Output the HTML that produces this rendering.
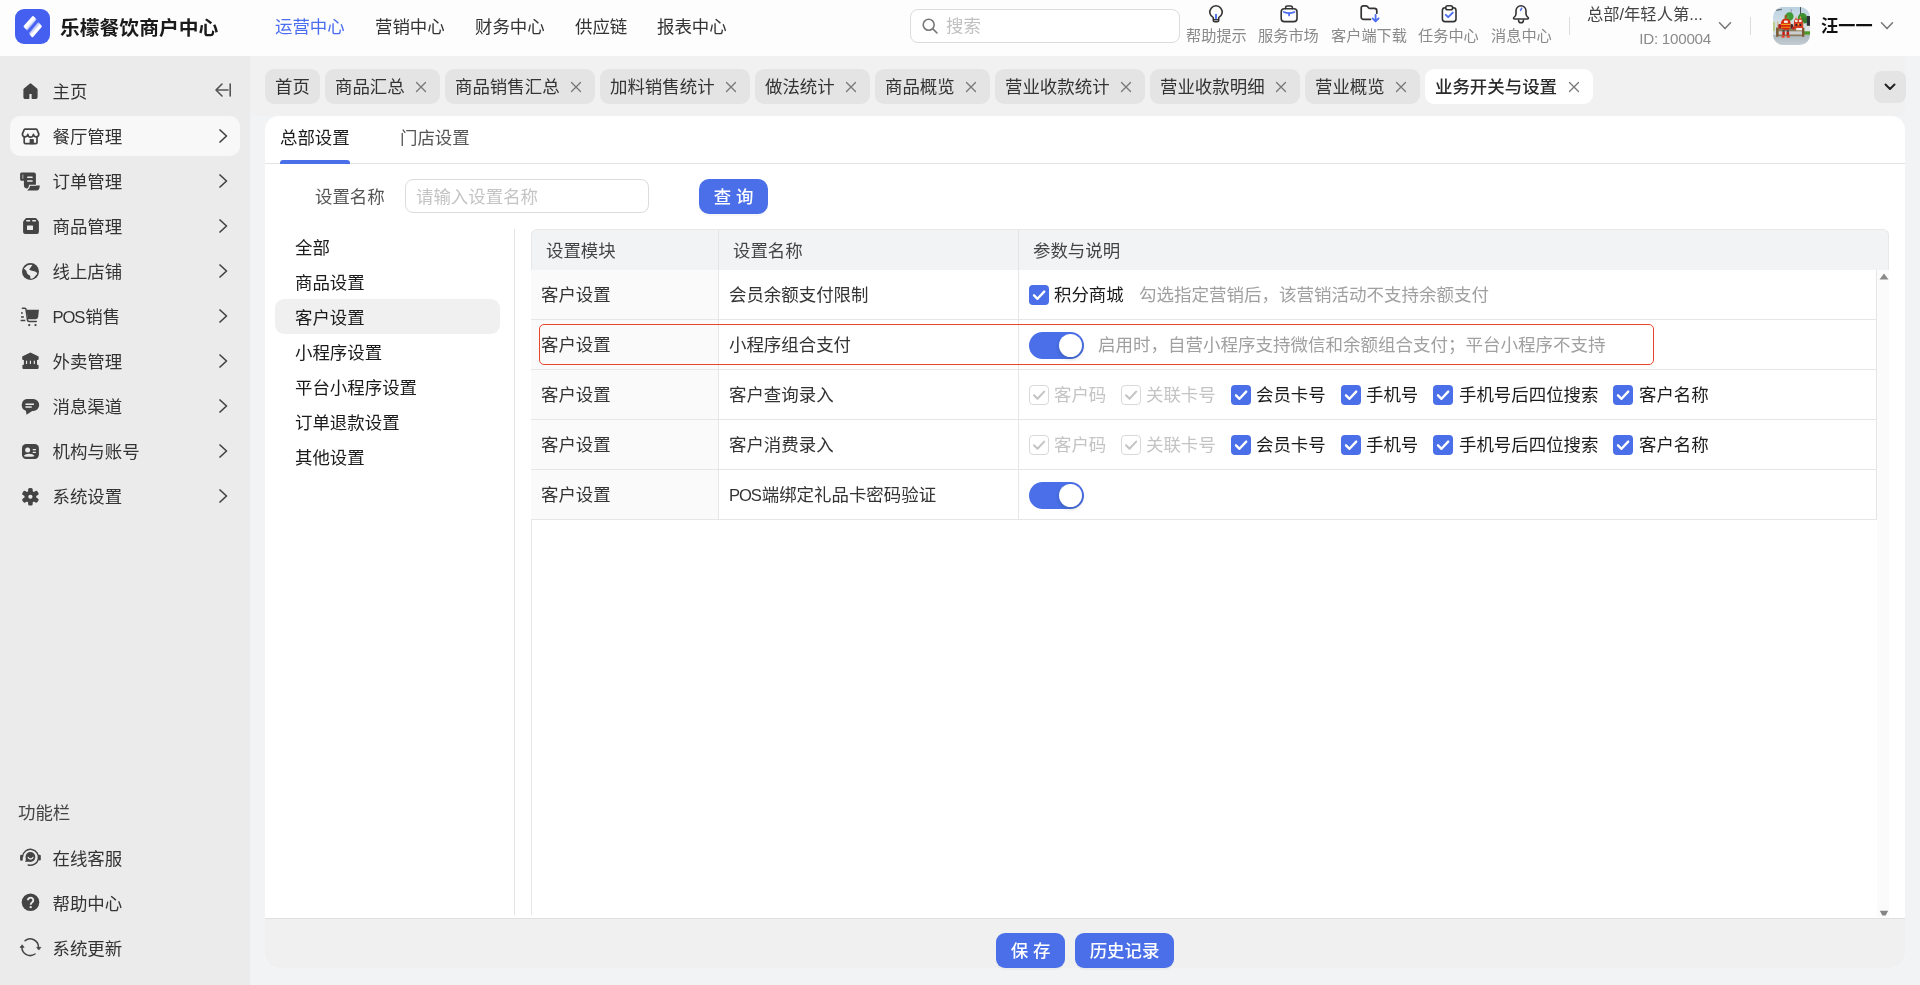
<!DOCTYPE html>
<html lang="zh-CN">
<head>
<meta charset="utf-8">
<title>乐檬餐饮商户中心</title>
<style>
*{box-sizing:border-box;margin:0;padding:0}
html,body{width:1920px;height:985px;overflow:hidden}
body{will-change:transform;font-family:"Liberation Sans","Noto Sans CJK SC",sans-serif;font-size:16px;color:#333;background:#f2f3f5;position:relative}
.abs{position:absolute}
/* header */
#hdr{position:absolute;left:0;top:0;width:1920px;height:56px;background:#fdfdfd}
#logo{position:absolute;left:15px;top:9px;width:35px;height:35px;border-radius:9px;background:#4560f0}
#brand{position:absolute;left:60px;top:12.600px;font-size:19.8px;line-height:30px;font-weight:700;color:#1a1a1a;letter-spacing:0px;white-space:nowrap}
.nav{position:absolute;top:12px;font-size:17.45px;line-height:30px;color:#333;white-space:nowrap}
.nav.on{color:#4a6cf0}
#search{position:absolute;left:910px;top:9px;width:270px;height:34px;border:1px solid #dcdcdc;border-radius:8px;background:#fff}
#search span{position:absolute;left:35px;top:2px;font-size:17.45px;line-height:28px;color:#c0c0c0}
.tool{position:absolute;top:26px;font-size:15.2px;line-height:20px;color:#8a8a8a;white-space:nowrap;text-align:center}
.tico{position:absolute;top:3px;width:22px;height:22px}
.vsep{position:absolute;top:17px;width:1px;height:18px;background:#dcdcdc}
/* sidebar */
#side{position:absolute;left:0;top:56px;width:250px;height:929px;background:#ebebeb}
.mi{position:absolute;left:10px;width:230px;height:40px;border-radius:10px}
.mi.on{background:#f8f8f8}
.mi .tx{position:absolute;left:42.500px;top:6px;font-size:17.45px;line-height:30px;color:#333;white-space:nowrap}
.mi svg.ic{position:absolute;left:11px;top:10px;width:20px;height:20px}
.mi svg.ar{position:absolute;left:207px;top:12px;width:12px;height:16px}
/* tabs */
.tab{position:absolute;top:69px;height:35px;border-radius:9px;background:#e4e4e4;font-size:17.45px;line-height:36px;color:#333;white-space:nowrap;padding-left:10px}
.tab.on{background:#fff;font-weight:500;color:#2a2a2a}
.tab svg{position:absolute;right:13px;top:12px;width:12px;height:12px}
/* card */
#card{position:absolute;left:265px;top:116px;width:1640px;height:852px;border-radius:14px;background:#fff;overflow:hidden}
#foot{position:absolute;left:0;top:802px;width:1640px;height:50px;background:#f0f0f0;border-top:1px solid #e0e0e0}
.btn{position:absolute;height:34px;border-radius:8px;background:#4a6fe8;color:#fff;font-weight:500;box-shadow:0 2px 0 rgba(0,0,0,.03);font-size:17.45px;line-height:34px;text-align:center;white-space:nowrap}
.cat{position:absolute;left:275px;width:225px;height:35px;border-radius:9px;font-size:17.45px;line-height:39px;padding-left:20px;color:#1a1a1a;white-space:nowrap}
.cat.on{background:#f0f0f0}
/* table */
#thead{position:absolute;left:531px;top:229px;width:1358px;height:41px;background:#f2f3f5;border:1px solid #e8e8e8;border-bottom:none;border-radius:6px 6px 0 0}
.th{position:absolute;top:230px;font-size:17.45px;line-height:42px;color:#444;white-space:nowrap}
.row{position:absolute;left:531px;width:1346px;height:50px;border-bottom:1px solid #e6e6e6}
.c1{position:absolute;left:0;top:0;width:187px;height:49px;background:#fafafa;font-size:17.45px;line-height:51px;padding-left:10px;color:#333}
.c2{position:absolute;left:187px;top:0;width:301px;height:49px;border-left:1px solid #e6e6e6;border-right:1px solid #e6e6e6;font-size:17.45px;line-height:51px;padding-left:10px;color:#333;white-space:nowrap}
.c3{position:absolute;left:487px;top:0;height:49px;font-size:17.45px;line-height:49px;white-space:nowrap}
.cb{position:absolute;top:15px;width:20px;height:20px;border-radius:4px;background:#4a6fe8}
.cb.dis{background:#fff;border:1px solid #d9d9d9}
.cb svg{position:absolute;left:0;top:0;width:20px;height:20px}
.cb.dis svg{left:-1px;top:-1px}
.lb{position:absolute;top:0;font-size:17.45px;line-height:51px;color:#1a1a1a;white-space:nowrap}
.lb.dis{color:#c4c4c4}
.lb.hint{color:#a0a0a0;font-size:17.5px}
.sw{position:absolute;left:498px;top:12px;width:55px;height:27px;border-radius:13.5px;background:#4a6fe8}
.sw i{position:absolute;right:2px;top:2px;width:23px;height:23px;border-radius:12px;background:#fff;box-shadow:0 2px 4px rgba(0,35,11,.2)}
.lat{font-size:16.6px;letter-spacing:-1.1px;margin-right:1px}
</style>
</head>
<body>
<div id="hdr">
  <div id="logo"><svg width="35" height="35" viewBox="0 0 35 35"><defs><linearGradient id="lg1" gradientUnits="userSpaceOnUse" x1="11" y1="10" x2="17.2" y2="15.6"><stop offset="0.7" stop-color="#fff"/><stop offset="0.95" stop-color="#fff" stop-opacity="0.45"/></linearGradient><linearGradient id="lg2" gradientUnits="userSpaceOnUse" x1="24.4" y1="25.4" x2="18.2" y2="19.8"><stop offset="0.7" stop-color="#fff"/><stop offset="0.95" stop-color="#fff" stop-opacity="0.45"/></linearGradient></defs><path d="M18 7.900 L20.600 10.600 L12.200 20.500 L9.500 17.400 Z" fill="url(#lg1)" stroke="url(#lg1)" stroke-width="1.800" stroke-linejoin="round"/><path d="M23.300 14.100 L26 17.500 L17.400 27.300 L14.900 24.300 Z" fill="url(#lg2)" stroke="url(#lg2)" stroke-width="1.800" stroke-linejoin="round"/></svg></div>
  <div id="brand">乐檬餐饮商户中心</div>
  <div class="nav on" style="left:275px">运营中心</div>
  <div class="nav" style="left:375px">营销中心</div>
  <div class="nav" style="left:475px">财务中心</div>
  <div class="nav" style="left:575px">供应链</div>
  <div class="nav" style="left:657px">报表中心</div>
  <div id="search"><svg class="abs" style="left:10px;top:7px" width="18" height="18" viewBox="0 0 18 18"><circle cx="7.700" cy="7.700" r="5.500" fill="none" stroke="#777" stroke-width="1.600"/><path d="M11.900 11.900 L16 16" stroke="#777" stroke-width="1.600" stroke-linecap="round"/></svg><span>搜索</span></div>
  <div class="tool" style="left:1186px;width:60px">帮助提示</div>
  <div class="tool" style="left:1258px;width:60px">服务市场</div>
  <div class="tool" style="left:1331px;width:75px">客户端下载</div>
  <div class="tool" style="left:1418px;width:60px">任务中心</div>
  <div class="tool" style="left:1491px;width:60px">消息中心</div>
<svg class="abs" style="left:1206px;top:4px" width="20" height="20" viewBox="0 0 20 20" fill="none" stroke-linecap="round" stroke-linejoin="round"><path d="M7.3 13.6 A6.2 6.2 0 1 1 12.7 13.6 V16.6 a1 1 0 0 1 -1 1 H8.3 a1 1 0 0 1 -1 -1 Z" stroke="#333" stroke-width="1.6"/><path d="M7.6 15.6 H12.4" stroke="#333" stroke-width="1.4"/><path d="M10 10.6 V14.2" stroke="#4a6cf0" stroke-width="1.9"/></svg>
<svg class="abs" style="left:1279px;top:4px" width="20" height="20" viewBox="0 0 20 20" fill="none" stroke-linecap="round" stroke-linejoin="round"><rect x="2.2" y="4.8" width="15.8" height="12.8" rx="3.2" stroke="#333" stroke-width="1.6"/><path d="M6.6 4.6 V3.6 a1.6 1.6 0 0 1 1.6 -1.6 h3.6 a1.6 1.6 0 0 1 1.6 1.6 V4.6" stroke="#333" stroke-width="1.6"/><path d="M4.8 8 Q10 10.4 15.4 8" stroke="#4a6cf0" stroke-width="1.8"/><path d="M10.1 9.4 V11.4" stroke="#4a6cf0" stroke-width="1.8"/></svg>
<svg class="abs" style="left:1360px;top:4px" width="20" height="20" viewBox="0 0 20 20" fill="none" stroke-linecap="round" stroke-linejoin="round"><path d="M10.4 15.4 H3.4 a2.2 2.2 0 0 1 -2.2 -2.2 V4 a2.2 2.2 0 0 1 2.2 -2.2 H6 a1.6 1.6 0 0 1 1.2 0.5 l1.4 1.6 a1.6 1.6 0 0 0 1.2 0.5 H14.4 a2.4 2.4 0 0 1 2.4 2.4 V9.2" stroke="#333" stroke-width="1.7"/><path d="M15.6 10.8 V17 M12.6 14.4 L15.6 17.4 L18.6 14.4" stroke="#4a6cf0" stroke-width="1.8"/></svg>
<svg class="abs" style="left:1439px;top:4px" width="20" height="20" viewBox="0 0 20 20" fill="none" stroke-linecap="round" stroke-linejoin="round"><rect x="3.4" y="3.8" width="13.6" height="13.8" rx="2.6" stroke="#333" stroke-width="1.6"/><rect x="6.8" y="1.8" width="6.8" height="4" rx="1.8" fill="#fdfdfd" stroke="#333" stroke-width="1.6"/><path d="M6.8 10.8 L9.2 13.2 L13.8 8.6" stroke="#4a6cf0" stroke-width="1.9"/></svg>
<svg class="abs" style="left:1511px;top:4px" width="20" height="20" viewBox="0 0 20 20" fill="none" stroke-linecap="round" stroke-linejoin="round"><path d="M10 1.8 a5 5 0 0 1 5 5 v3.2 c0 1.5 0.9 2.5 2.1 3.5 c0.6 0.5 0.3 1.5 -0.6 1.5 H3.5 c-0.9 0 -1.2 -1 -0.6 -1.5 c1.2 -1 2.1 -2 2.1 -3.5 v-3.200 a5 5 0 0 1 5 -5 Z" stroke="#333" stroke-width="1.6"/><path d="M7.5 15.9 a2.5 2.9 0 0 0 5 0" stroke="#333" stroke-width="1.5"/><path d="M10.7 4.2 L9.6 6.4" stroke="#4a6cf0" stroke-width="1.5"/></svg>
<svg class="abs" style="left:1718px;top:21px" width="14" height="10" viewBox="0 0 14 10"><path d="M1.5 1.8 L7 7.6 L12.5 1.8" fill="none" stroke="#777" stroke-width="1.5" stroke-linecap="round" stroke-linejoin="round"/></svg>
<svg class="abs" style="left:1880px;top:21px" width="14" height="10" viewBox="0 0 14 10"><path d="M1.5 1.8 L7 7.6 L12.5 1.8" fill="none" stroke="#777" stroke-width="1.5" stroke-linecap="round" stroke-linejoin="round"/></svg>
  <div class="vsep" style="left:1569px"></div>
  <div class="abs" style="left:1587px;top:3px;font-size:16.3px;line-height:22px;color:#444;white-space:nowrap">总部/年轻人第...</div>
  <div class="abs" style="left:1611px;width:100px;text-align:right;top:29px;font-size:15.2px;line-height:20px;letter-spacing:-0.25px;color:#8a8a8a;white-space:nowrap">ID: 100004</div>
  <div class="vsep" style="left:1750px"></div>
  <div class="abs" style="left:1773px;top:7px;width:37px;height:38px;border-radius:10px;overflow:hidden"><svg width="37" height="38" viewBox="0 0 37 38"><defs><filter id="bl" x="-5%" y="-5%" width="110%" height="110%"><feGaussianBlur stdDeviation="0.35"/></filter><linearGradient id="sky" x1="0" y1="0" x2="0" y2="1"><stop offset="0" stop-color="#b9d0e0"/><stop offset="1" stop-color="#dbe5ea"/></linearGradient><linearGradient id="gnd" x1="0" y1="0" x2="0" y2="1"><stop offset="0" stop-color="#aab6bd"/><stop offset="1" stop-color="#c7d0d6"/></linearGradient></defs><g filter="url(#bl)"><rect x="-1" y="-1" width="39" height="23" fill="url(#sky)"/><rect x="-1" y="27.500" width="39" height="12" fill="url(#gnd)"/><rect x="0" y="13" width="37" height="15" fill="#d3dcdf"/><rect x="27" y="0" width="1" height="8" fill="#4a4f52"/><rect x="17.800" y="2" width="0.700" height="5" fill="#7c868c"/><path d="M3 2.500 L9 1.800 L9 3 L3 4 Z" fill="#6d767c"/><circle cx="16.400" cy="9.500" r="4.200" fill="#3f9a35"/><circle cx="14" cy="10.500" r="2.600" fill="#4aa640"/><ellipse cx="29.500" cy="11" rx="4.600" ry="5" fill="#3c8f33"/><circle cx="31.500" cy="13.500" r="3" fill="#347f2d"/><rect x="33.800" y="9" width="4" height="10" fill="#2f3537"/><rect x="32.500" y="18.800" width="5" height="5.500" fill="#dfe4e6"/><rect x="31" y="24.300" width="7" height="3.400" fill="#4c9a2a"/><rect x="0" y="15" width="2" height="9" fill="#b7cf8a"/><rect x="3.200" y="20.600" width="28" height="8.600" fill="#8d7a5c"/><rect x="5.500" y="24.300" width="23.500" height="3.200" fill="#c9cdcd"/><rect x="3.200" y="20.600" width="2.200" height="9.200" fill="#7a5a34"/><rect x="29" y="20.600" width="2.200" height="9.200" fill="#7a5a34"/><rect x="4.200" y="14.500" width="1" height="6.500" fill="#c8b389"/><rect x="29.600" y="15" width="1" height="6" fill="#c8b389"/><path d="M12.900 11.600 C16.500 11.600 17.900 14.500 17.700 18 C17.700 21.500 16.500 22.800 12.900 22.800 C9.300 22.800 7.900 21.500 7.900 18 C7.700 14.500 9.300 11.600 12.900 11.600 Z" fill="#d8260f"/><rect x="8.200" y="16.800" width="9.300" height="1.200" fill="#f0a31c"/><rect x="8.200" y="19.800" width="9.300" height="1" fill="#e98a12"/><rect x="10.900" y="13.600" width="4" height="2.400" rx="0.800" fill="#f4efe6"/><path d="M11.500 8.300 L12.900 11.500 L14.300 8.300 L13.400 8.300 L12.900 9.800 L12.400 8.300 Z" fill="#d8260f"/><rect x="5.300" y="17" width="2.700" height="4.600" rx="1.200" fill="#b11d14"/><rect x="17.600" y="17" width="2.500" height="4.600" rx="1.200" fill="#3a2a28"/><rect x="9.500" y="23" width="2.100" height="2" fill="#4a4f50"/><rect x="13.800" y="23" width="2.100" height="2" fill="#4a4f50"/><rect x="9.300" y="24.800" width="2.500" height="3.600" fill="#c81d12"/><rect x="13.600" y="24.800" width="2.500" height="3.600" fill="#c81d12"/><ellipse cx="10.100" cy="29.800" rx="1.900" ry="0.900" fill="#f0391c"/><ellipse cx="15.200" cy="29.800" rx="1.900" ry="0.900" fill="#f0391c"/><path d="M21 14 L22.500 11 L25.300 12.200 L28 11 L29.800 14 L30 22 L20.600 22 Z" fill="#d43a22"/><rect x="22" y="12.800" width="2.600" height="2.200" fill="#f1ece2"/><rect x="26" y="12.800" width="2.600" height="2.200" fill="#f1ece2"/><path d="M22.300 11.200 L23.400 8.800 L24 11.400 Z M26.600 11.400 L27.300 8.800 L28.300 11.200 Z" fill="#e8a05a"/><rect x="23.200" y="21" width="5.800" height="2.300" fill="#f2efe8"/><rect x="22.600" y="17" width="1.600" height="2" fill="#2c2523"/><rect x="26.600" y="17" width="1.600" height="2" fill="#2c2523"/><path d="M24.400 16.500 L26.400 16.500 L25.400 18.600 Z" fill="#f0b429"/><rect x="19.200" y="19.500" width="2.200" height="3" rx="1" fill="#c4241a"/></g></svg></div>
  <div class="abs" style="left:1821px;top:11px;font-size:17.2px;line-height:30px;color:#111;font-weight:700;white-space:nowrap">汪一一</div>
</div>
<div class="abs" style="left:250px;top:56px;width:1655px;height:60px;background:#f1f1f1"></div>
<div id="side">
<div class="mi" style="top:15px"><svg class="ic" viewBox="0 0 20 20" overflow="visible"><path d="M9.5 3 L3.2 8.4 V16.2 a1 1 0 0 0 1 1 H7.6 V13 a0.8 0.8 0 0 1 0.8 -0.8 h2.2 a0.8 0.8 0 0 1 0.800 0.8 V17.2 H14.800 a1 1 0 0 0 1 -1 V8.4 Z" fill="#444" stroke="#444" stroke-width="1.6" stroke-linejoin="round"/></svg><div class="tx">主页</div></div>
<div class="mi on" style="top:60px"><svg class="ic" viewBox="0 0 20 20" overflow="visible"><g transform="translate(-0.4 0.3)"><path d="M4.6 2.8 H15.4 a1.2 1.2 0 0 1 1.1 0.7 L18.2 7.6 a2.7 2.7 0 0 1 -5.4 0.4 a2.8 2.8 0 0 1 -5.600 0 a2.700 2.700 0 0 1 -5.400 -0.400 L3.500 3.500 a1.200 1.200 0 0 1 1.100 -0.700 Z" fill="none" stroke="#444" stroke-width="1.7" stroke-linejoin="round"/><path d="M3.600 10.600 V16.200 a1.200 1.200 0 0 0 1.200 1.200 H15.200 a1.200 1.200 0 0 0 1.200 -1.200 V10.600" fill="none" stroke="#444" stroke-width="1.7" stroke-linejoin="round"/><path d="M9.600 17.400 V13.400 H12.600 V17.400 Z" fill="#444" stroke="#444" stroke-width="1.200" stroke-linejoin="round"/></g></svg><div class="tx">餐厅管理</div><svg class="ar" viewBox="0 0 12 16"><path d="M3 2 L9.5 8 L3 14" fill="none" stroke="#444" stroke-width="1.7" stroke-linecap="round" stroke-linejoin="round"/></svg></div>
<div class="mi" style="top:105px"><svg class="ic" viewBox="0 0 20 20" overflow="visible"><path d="M0.6 1.6 H12.9 a2 2 0 0 1 2 2 V14.6 H8 V17.6 H6.400 a3.500 3.500 0 0 1 -3.500 -3.500 V9.700 H0.600 a1.500 1.500 0 0 1 -1.500 -1.500 V3.100 a1.500 1.500 0 0 1 1.500 -1.500 Z" fill="#444"/><rect x="1" y="3.600" width="1.500" height="4.200" fill="#8e8e8e"/><rect x="6.100" y="5.500" width="5.600" height="1.500" rx="0.500" fill="#ebebeb"/><rect x="6.100" y="9.300" width="5.600" height="1.500" rx="0.500" fill="#ebebeb"/><path d="M8.200 14.500 H18.900 L18.300 17.600 a2.200 2.200 0 0 1 -2.100 1.800 H6.300 Z" fill="#444"/><path d="M5.600 18.800 Q8.200 17.800 8.600 14.300 H15" fill="none" stroke="#ebebeb" stroke-width="1.100"/></svg><div class="tx">订单管理</div><svg class="ar" viewBox="0 0 12 16"><path d="M3 2 L9.5 8 L3 14" fill="none" stroke="#444" stroke-width="1.7" stroke-linecap="round" stroke-linejoin="round"/></svg></div>
<div class="mi" style="top:150px"><svg class="ic" viewBox="0 0 20 20" overflow="visible"><path d="M5.800 1.900 H14.200 a1.800 1.800 0 0 1 1.500 0.800 L17.600 5.200 a1.800 1.800 0 0 1 0.300 1 V16 a2 2 0 0 1 -2 2 H4.100 a2 2 0 0 1 -2 -2 V6.200 a1.800 1.800 0 0 1 0.300 -1 L4.300 2.700 a1.800 1.800 0 0 1 1.500 -0.800 Z" fill="#444"/><rect x="5.200" y="3.900" width="4" height="1.600" rx="0.400" fill="#ebebeb"/><rect x="11.200" y="3.900" width="3.800" height="1.600" rx="0.400" fill="#ebebeb"/><rect x="6" y="9.500" width="6" height="4.400" rx="0.500" fill="#ebebeb"/></svg><div class="tx">商品管理</div><svg class="ar" viewBox="0 0 12 16"><path d="M3 2 L9.5 8 L3 14" fill="none" stroke="#444" stroke-width="1.7" stroke-linecap="round" stroke-linejoin="round"/></svg></div>
<div class="mi" style="top:195px"><svg class="ic" viewBox="0 0 20 20" overflow="visible"><circle cx="9.500" cy="10.400" r="8.500" fill="#444"/><path d="M2.900 7.400 L6.300 4.400 Q9 3.200 11.400 3.900 L8.200 8.600 Q8.400 9.600 11.900 10 Q14.600 10.400 15.300 11.200 Q16.400 12 16.100 13 L12.700 16.800 Q11 17.800 9.300 17.600 Q9.600 15.600 8.900 14.500 Q7.400 13.900 6.300 12.700 Q5.400 11.400 5.500 10 Z" fill="#ebebeb"/></svg><div class="tx">线上店铺</div><svg class="ar" viewBox="0 0 12 16"><path d="M3 2 L9.5 8 L3 14" fill="none" stroke="#444" stroke-width="1.7" stroke-linecap="round" stroke-linejoin="round"/></svg></div>
<div class="mi" style="top:240px"><svg class="ic" viewBox="0 0 20 20" overflow="visible"><path d="M5.500 3.800 H17.900 L17.200 10.800 a2.600 2.600 0 0 1 -2.600 2.400 H7 Z" fill="#444"/><path d="M1.400 2.300 H3.800 a1.200 1.200 0 0 1 1.200 1 L6.500 14.200 a1.600 1.600 0 0 0 1.600 1.400 H15.300" fill="none" stroke="#444" stroke-width="1.500" stroke-linecap="round"/><circle cx="8.200" cy="19.100" r="1.150" fill="#444"/><circle cx="14.500" cy="19.100" r="1.150" fill="#444"/><path d="M0 7.100 H1.800 M0 10.900 H2.900 M-0.400 14.500 H4.300" stroke="#444" stroke-width="1.500"/></svg><div class="tx"><span class="lat">POS</span>销售</div><svg class="ar" viewBox="0 0 12 16"><path d="M3 2 L9.5 8 L3 14" fill="none" stroke="#444" stroke-width="1.7" stroke-linecap="round" stroke-linejoin="round"/></svg></div>
<div class="mi" style="top:285px"><svg class="ic" viewBox="0 0 20 20" overflow="visible"><path d="M9.400 1.600 L17.200 5.300 a0.800 0.800 0 0 1 0.450 0.700 V8.100 a0.800 0.800 0 0 1 -0.800 0.800 H16 V13.800 H16.800 a0.800 0.800 0 0 1 0.800 0.800 V17.100 a0.800 0.800 0 0 1 -0.800 0.800 H2.200 a0.800 0.800 0 0 1 -0.800 -0.800 V14.600 a0.800 0.800 0 0 1 0.800 -0.800 H2.900 V8.900 H2 a0.800 0.800 0 0 1 -0.800 -0.800 V6 a0.800 0.800 0 0 1 0.450 -0.700 Z" fill="#444"/><rect x="4.950" y="9.700" width="1.150" height="3.300" fill="#ebebeb"/><rect x="8.850" y="9.700" width="1.150" height="3.300" fill="#ebebeb"/><rect x="12.750" y="9.700" width="1.150" height="3.300" fill="#ebebeb"/></svg><div class="tx">外卖管理</div><svg class="ar" viewBox="0 0 12 16"><path d="M3 2 L9.5 8 L3 14" fill="none" stroke="#444" stroke-width="1.7" stroke-linecap="round" stroke-linejoin="round"/></svg></div>
<div class="mi" style="top:330px"><svg class="ic" viewBox="0 0 20 20" overflow="visible"><path d="M7 3 H12.200 a6 6 0 0 1 0 12 H11.200 L5.500 18.800 L4.900 14.700 A6 6 0 0 1 7 3 Z" fill="#444"/><rect x="4.400" y="7.400" width="8.600" height="1.600" rx="0.400" fill="#ebebeb"/><rect x="4.400" y="10.200" width="6.400" height="1.600" rx="0.400" fill="#ebebeb"/></svg><div class="tx">消息渠道</div><svg class="ar" viewBox="0 0 12 16"><path d="M3 2 L9.5 8 L3 14" fill="none" stroke="#444" stroke-width="1.7" stroke-linecap="round" stroke-linejoin="round"/></svg></div>
<div class="mi" style="top:375px"><svg class="ic" viewBox="0 0 20 20" overflow="visible"><rect x="1" y="2.900" width="16.900" height="15" rx="4.200" fill="#444"/><circle cx="6.650" cy="9.100" r="2.500" fill="#ebebeb"/><path d="M2.900 15.300 a5.250 2.600 0 0 1 10.500 0 Q8.100 16.400 2.900 15.300 Z" fill="#ebebeb"/><rect x="11.700" y="7.900" width="3.200" height="1.300" rx="0.300" fill="#ebebeb"/><rect x="11.700" y="10.700" width="3.200" height="1.300" rx="0.300" fill="#ebebeb"/></svg><div class="tx">机构与账号</div><svg class="ar" viewBox="0 0 12 16"><path d="M3 2 L9.5 8 L3 14" fill="none" stroke="#444" stroke-width="1.7" stroke-linecap="round" stroke-linejoin="round"/></svg></div>
<div class="mi" style="top:420px"><svg class="ic" viewBox="0 0 20 20" overflow="visible"><circle cx="9.4" cy="10.75" r="5.9" fill="#444"/><rect x="7.1000000000000005" y="1.9499999999999993" width="4.6" height="6" rx="1.5" fill="#444" transform="rotate(0 9.4 10.75)"/><rect x="7.1000000000000005" y="1.9499999999999993" width="4.6" height="6" rx="1.5" fill="#444" transform="rotate(60 9.4 10.75)"/><rect x="7.1000000000000005" y="1.9499999999999993" width="4.6" height="6" rx="1.5" fill="#444" transform="rotate(120 9.4 10.75)"/><rect x="7.1000000000000005" y="1.9499999999999993" width="4.6" height="6" rx="1.5" fill="#444" transform="rotate(180 9.4 10.75)"/><rect x="7.1000000000000005" y="1.9499999999999993" width="4.6" height="6" rx="1.5" fill="#444" transform="rotate(240 9.4 10.75)"/><rect x="7.1000000000000005" y="1.9499999999999993" width="4.6" height="6" rx="1.5" fill="#444" transform="rotate(300 9.4 10.75)"/><circle cx="9.4" cy="10.75" r="2.1" fill="#ebebeb"/></svg><div class="tx">系统设置</div><svg class="ar" viewBox="0 0 12 16"><path d="M3 2 L9.5 8 L3 14" fill="none" stroke="#444" stroke-width="1.7" stroke-linecap="round" stroke-linejoin="round"/></svg></div>
<div class="mi" style="top:782px"><svg class="ic" viewBox="0 0 20 20" overflow="visible"><path d="M1.500 8.600 A8 8 0 1 1 7.200 17" fill="none" stroke="#444" stroke-width="1.500" stroke-linecap="round"/><rect x="-0.900" y="6.700" width="2.700" height="6" rx="1.300" fill="#444"/><rect x="17.100" y="6.700" width="2.700" height="5.800" rx="1.300" fill="#444"/><circle cx="9.400" cy="9" r="4.900" fill="#444"/><path d="M4.300 14 L5 10.500 L8.400 13.600 Z" fill="#444"/><path d="M7.200 9.400 a2.500 2.200 0 0 0 4.800 0" fill="none" stroke="#ebebeb" stroke-width="1.300" stroke-linecap="round"/></svg><div class="tx">在线客服</div></div>
<div class="mi" style="top:827px"><svg class="ic" viewBox="0 0 20 20" overflow="visible"><circle cx="9.500" cy="9.200" r="8.800" fill="#444"/><path d="M6.900 7.200 a2.700 2.500 0 1 1 4.300 2 c-1 0.700 -1.500 1.200 -1.500 2.500" fill="none" stroke="#ebebeb" stroke-width="1.900" stroke-linecap="butt"/><circle cx="9.700" cy="14.100" r="1.200" fill="#ebebeb"/></svg><div class="tx">帮助中心</div></div>
<div class="mi" style="top:872px"><svg class="ic" viewBox="0 0 20 20" overflow="visible"><path d="M4.100 2.700 A8.300 8.300 0 0 1 17.500 9.200" fill="none" stroke="#444" stroke-width="1.500" stroke-linecap="round"/><path d="M14 16 A8.300 8.300 0 0 1 0.900 9.200" fill="none" stroke="#444" stroke-width="1.500" stroke-linecap="round"/><path d="M15.600 9.300 H20 L17.800 12.100 Z" fill="#444" stroke="#444" stroke-width="0.600" stroke-linejoin="round"/><path d="M-1 9.400 H3.200 L1.100 6.700 Z" fill="#444" stroke="#444" stroke-width="0.600" stroke-linejoin="round"/></svg><div class="tx">系统更新</div></div>
<svg class="abs" style="left:214px;top:26px" width="18" height="16" viewBox="0 0 18 16"><path d="M8 2 L2 8 L8 14 M2 8 H14 M16.2 2 V14" fill="none" stroke="#555" stroke-width="1.6" stroke-linecap="round" stroke-linejoin="round"/></svg>
<div class="abs" style="left:18px;top:742px;font-size:17.45px;line-height:30px;color:#444">功能栏</div>
</div>
<div class="tab" style="left:265px;width:55px">首页</div>
<div class="tab" style="left:325px;width:115px">商品汇总<svg viewBox="0 0 12 12"><path d="M1.5 1.5 L10.5 10.5 M10.5 1.5 L1.5 10.5" stroke="#777" stroke-width="1.3" stroke-linecap="round"/></svg></div>
<div class="tab" style="left:445px;width:150px">商品销售汇总<svg viewBox="0 0 12 12"><path d="M1.5 1.5 L10.5 10.5 M10.5 1.5 L1.5 10.5" stroke="#777" stroke-width="1.3" stroke-linecap="round"/></svg></div>
<div class="tab" style="left:600px;width:150px">加料销售统计<svg viewBox="0 0 12 12"><path d="M1.5 1.5 L10.5 10.5 M10.5 1.5 L1.5 10.5" stroke="#777" stroke-width="1.3" stroke-linecap="round"/></svg></div>
<div class="tab" style="left:755px;width:115px">做法统计<svg viewBox="0 0 12 12"><path d="M1.5 1.5 L10.5 10.5 M10.5 1.5 L1.5 10.5" stroke="#777" stroke-width="1.3" stroke-linecap="round"/></svg></div>
<div class="tab" style="left:875px;width:115px">商品概览<svg viewBox="0 0 12 12"><path d="M1.5 1.5 L10.5 10.5 M10.5 1.5 L1.5 10.5" stroke="#777" stroke-width="1.3" stroke-linecap="round"/></svg></div>
<div class="tab" style="left:995px;width:150px">营业收款统计<svg viewBox="0 0 12 12"><path d="M1.5 1.5 L10.5 10.5 M10.5 1.5 L1.5 10.5" stroke="#777" stroke-width="1.3" stroke-linecap="round"/></svg></div>
<div class="tab" style="left:1150px;width:150px">营业收款明细<svg viewBox="0 0 12 12"><path d="M1.5 1.5 L10.5 10.5 M10.5 1.5 L1.5 10.5" stroke="#777" stroke-width="1.3" stroke-linecap="round"/></svg></div>
<div class="tab" style="left:1305px;width:115px">营业概览<svg viewBox="0 0 12 12"><path d="M1.5 1.5 L10.5 10.5 M10.5 1.5 L1.5 10.5" stroke="#777" stroke-width="1.3" stroke-linecap="round"/></svg></div>
<div class="tab on" style="left:1425px;width:168px">业务开关与设置<svg viewBox="0 0 12 12"><path d="M1.5 1.5 L10.5 10.5 M10.5 1.5 L1.5 10.5" stroke="#777" stroke-width="1.3" stroke-linecap="round"/></svg></div>
<div class="abs" style="left:1874px;top:71px;width:32px;height:32px;border-radius:8px;background:#e4e4e4"><svg class="abs" style="left:9px;top:11px" width="14" height="10" viewBox="0 0 14 10"><path d="M2.5 2.5 L7 7 L11.5 2.5" fill="none" stroke="#222" stroke-width="2" stroke-linecap="round" stroke-linejoin="round"/></svg></div>
<div id="card">
  <div id="foot"></div>
</div>
<div class="abs" style="left:280px;top:123px;font-size:17.45px;line-height:30px;color:#1a1a1a;white-space:nowrap">总部设置</div>
<div class="abs" style="left:400px;top:123px;font-size:17.45px;line-height:30px;color:#555;white-space:nowrap">门店设置</div>
<div class="abs" style="left:265px;top:163px;width:1640px;height:1px;background:#e4e4e4"></div>
<div class="abs" style="left:280px;top:160px;width:70px;height:4px;border-radius:3px 3px 0 0;background:#4a6fe8"></div>
<div class="abs" style="left:315px;top:182px;font-size:17.45px;line-height:30px;color:#555;white-space:nowrap">设置名称</div>
<div class="abs" style="left:405px;top:179px;width:244px;height:34px;border:1px solid #dcdcdc;border-radius:8px;background:#fff"><span class="abs" style="left:10px;top:1px;font-size:17.45px;line-height:32px;color:#c4c4c4;white-space:nowrap">请输入设置名称</span></div>
<div class="btn" style="left:699px;top:179px;width:69px;height:35px;line-height:37px;border-radius:10px">查 询</div>
<div class="cat" style="top:229px">全部</div>
<div class="cat" style="top:264px">商品设置</div>
<div class="cat on" style="top:299px">客户设置</div>
<div class="cat" style="top:334px">小程序设置</div>
<div class="cat" style="top:369px">平台小程序设置</div>
<div class="cat" style="top:404px">订单退款设置</div>
<div class="cat" style="top:439px">其他设置</div>
<div class="abs" style="left:514px;top:229px;width:1px;height:686px;background:#e4e4e4"></div>
<div id="thead"></div>
<div class="abs" style="left:531px;top:270px;width:1px;height:645px;background:#e8e8e8"></div>
<div class="abs" style="left:718px;top:230px;width:1px;height:40px;background:#e4e4e4"></div>
<div class="abs" style="left:1018px;top:230px;width:1px;height:40px;background:#e4e4e4"></div>
<div class="th" style="left:546px">设置模块</div><div class="th" style="left:733px">设置名称</div><div class="th" style="left:1033px">参数与说明</div>
<div class="row" style="top:270px"><div class="c1">客户设置</div><div class="c2">会员余额支付限制</div><div class="cb" style="left:498px"><svg viewBox="0 0 20 20"><path d="M5 10.300 L8.500 13.800 L15.200 6.600" fill="none" stroke="#fff" stroke-width="2.400" stroke-linecap="round" stroke-linejoin="round"/></svg></div><div class="lb" style="left:523px">积分商城</div><div class="lb hint" style="left:608px">勾选指定营销后，该营销活动不支持余额支付</div></div>
<div class="row" style="top:320px"><div class="c1">客户设置</div><div class="c2">小程序组合支付</div><div class="sw"><i></i></div><div class="lb hint" style="left:567px">启用时，自营小程序支持微信和余额组合支付；平台小程序不支持</div></div>
<div class="row" style="top:370px"><div class="c1">客户设置</div><div class="c2">客户查询录入</div><div class="cb dis" style="left:498px"><svg viewBox="0 0 20 20"><path d="M5 10.300 L8.500 13.800 L15.200 6.600" fill="none" stroke="#c4c4c4" stroke-width="2" stroke-linecap="round" stroke-linejoin="round"/></svg></div><div class="lb dis" style="left:523px">客户码</div><div class="cb dis" style="left:590px"><svg viewBox="0 0 20 20"><path d="M5 10.300 L8.500 13.800 L15.200 6.600" fill="none" stroke="#c4c4c4" stroke-width="2" stroke-linecap="round" stroke-linejoin="round"/></svg></div><div class="lb dis" style="left:615px">关联卡号</div><div class="cb" style="left:700px"><svg viewBox="0 0 20 20"><path d="M5 10.300 L8.500 13.800 L15.200 6.600" fill="none" stroke="#fff" stroke-width="2.400" stroke-linecap="round" stroke-linejoin="round"/></svg></div><div class="lb" style="left:725px">会员卡号</div><div class="cb" style="left:810px"><svg viewBox="0 0 20 20"><path d="M5 10.300 L8.500 13.800 L15.200 6.600" fill="none" stroke="#fff" stroke-width="2.400" stroke-linecap="round" stroke-linejoin="round"/></svg></div><div class="lb" style="left:835px">手机号</div><div class="cb" style="left:902px"><svg viewBox="0 0 20 20"><path d="M5 10.300 L8.500 13.800 L15.200 6.600" fill="none" stroke="#fff" stroke-width="2.400" stroke-linecap="round" stroke-linejoin="round"/></svg></div><div class="lb" style="left:928px">手机号后四位搜索</div><div class="cb" style="left:1082px"><svg viewBox="0 0 20 20"><path d="M5 10.300 L8.500 13.800 L15.200 6.600" fill="none" stroke="#fff" stroke-width="2.400" stroke-linecap="round" stroke-linejoin="round"/></svg></div><div class="lb" style="left:1108px">客户名称</div></div>
<div class="row" style="top:420px"><div class="c1">客户设置</div><div class="c2">客户消费录入</div><div class="cb dis" style="left:498px"><svg viewBox="0 0 20 20"><path d="M5 10.300 L8.500 13.800 L15.200 6.600" fill="none" stroke="#c4c4c4" stroke-width="2" stroke-linecap="round" stroke-linejoin="round"/></svg></div><div class="lb dis" style="left:523px">客户码</div><div class="cb dis" style="left:590px"><svg viewBox="0 0 20 20"><path d="M5 10.300 L8.500 13.800 L15.200 6.600" fill="none" stroke="#c4c4c4" stroke-width="2" stroke-linecap="round" stroke-linejoin="round"/></svg></div><div class="lb dis" style="left:615px">关联卡号</div><div class="cb" style="left:700px"><svg viewBox="0 0 20 20"><path d="M5 10.300 L8.500 13.800 L15.200 6.600" fill="none" stroke="#fff" stroke-width="2.400" stroke-linecap="round" stroke-linejoin="round"/></svg></div><div class="lb" style="left:725px">会员卡号</div><div class="cb" style="left:810px"><svg viewBox="0 0 20 20"><path d="M5 10.300 L8.500 13.800 L15.200 6.600" fill="none" stroke="#fff" stroke-width="2.400" stroke-linecap="round" stroke-linejoin="round"/></svg></div><div class="lb" style="left:835px">手机号</div><div class="cb" style="left:902px"><svg viewBox="0 0 20 20"><path d="M5 10.300 L8.500 13.800 L15.200 6.600" fill="none" stroke="#fff" stroke-width="2.400" stroke-linecap="round" stroke-linejoin="round"/></svg></div><div class="lb" style="left:928px">手机号后四位搜索</div><div class="cb" style="left:1082px"><svg viewBox="0 0 20 20"><path d="M5 10.300 L8.500 13.800 L15.200 6.600" fill="none" stroke="#fff" stroke-width="2.400" stroke-linecap="round" stroke-linejoin="round"/></svg></div><div class="lb" style="left:1108px">客户名称</div></div>
<div class="row" style="top:470px"><div class="c1">客户设置</div><div class="c2"><span class="lat">POS</span>端绑定礼品卡密码验证</div><div class="sw"><i></i></div></div>
<div class="abs" style="left:539px;top:324px;width:1115px;height:41px;border:1px solid #e8452c;border-radius:5px"></div>
<div class="abs" style="left:1877px;top:270px;width:12px;height:647px;background:#fbfbfb"></div><div class="abs" style="left:1876px;top:270px;width:1px;height:250px;background:#e6e6e6"></div>
<svg class="abs" style="left:1878.600px;top:273.300px" width="10" height="7" viewBox="0 0 10 7"><path d="M5 0.5 L9.5 6.5 H0.5 Z" fill="#8a8a8a"/></svg>
<svg class="abs" style="left:1878.700px;top:909.500px" width="10" height="7" viewBox="0 0 10 7"><path d="M0.800 0.800 H9.200 L6.600 5.600 H3.400 Z" fill="#858585"/></svg>
<div class="btn" style="left:996px;top:933px;width:69px;height:35px;line-height:36px;border-radius:9px">保 存</div>
<div class="btn" style="left:1075px;top:933px;width:99px;height:35px;line-height:36px;border-radius:9px">历史记录</div>
</body>
</html>
